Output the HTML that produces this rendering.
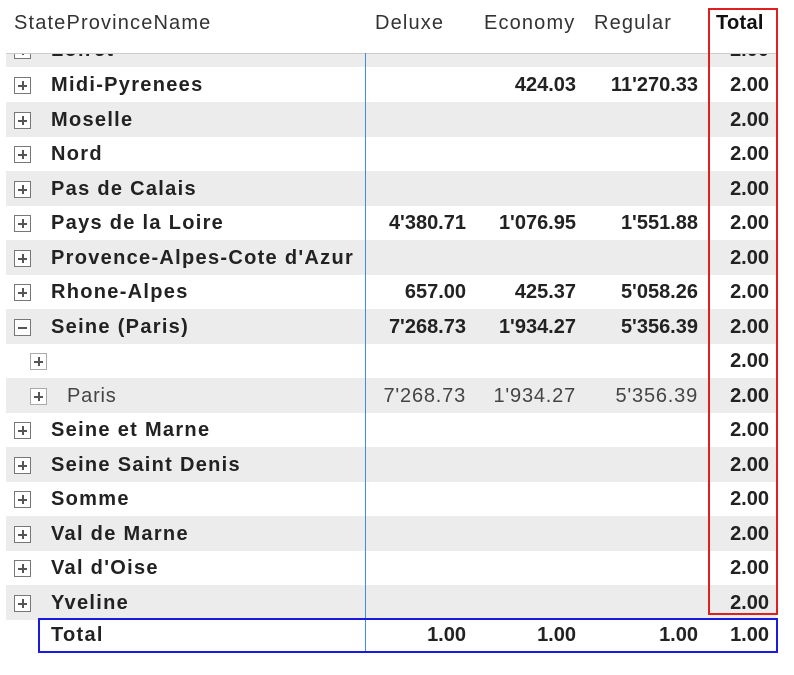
<!DOCTYPE html>
<html><head><style>
body{margin:0;width:794px;height:675px;background:#fff;font-family:"Liberation Sans",sans-serif;color:#222;position:relative;overflow:hidden}
.h{position:absolute;top:12px;font-size:20px;color:#333;letter-spacing:1.15px}
.r{position:absolute;left:6px;width:770px;height:35px;font-size:20px;font-weight:bold;line-height:37px}
.g{background:#ececec}
.r span{position:absolute}
.n{left:45px;letter-spacing:1.3px}
.c1{right:310px}.c2{right:200px}.c3{right:78px}.c4{right:7px}
.pl{position:absolute;left:8px;top:10px;width:15px;height:15px;border:1.5px solid #777;background:#fff}
.pl:before{content:"";position:absolute;left:3px;top:6.5px;width:9px;height:2px;background:#555}
.pl.p:after{content:"";position:absolute;left:6.5px;top:3px;width:2px;height:9px;background:#555}
.lt{font-weight:normal;color:#444;letter-spacing:0.8px}
</style></head><body>
<div class="h" style="left:14px">StateProvinceName</div>
<div class="h" style="left:375px">Deluxe</div>
<div class="h" style="left:484px">Economy</div>
<div class="h" style="left:594px">Regular</div>
<div class="h" style="left:716px;font-weight:bold;color:#111;letter-spacing:0.3px">Total</div>
<div style="position:absolute;left:6px;top:53px;width:770px;height:1px;background:#ccc"></div>
<div class="r g" style="top:32px;height:35px;clip-path:inset(22px 0 0 0)"><div class="pl p"></div><span class="n">Loiret</span><span class="c4">2.00</span></div>
<div class="r" style="top:67px"><div class="pl p"></div><span class="n">Midi-Pyrenees</span><span class="c2">424.03</span><span class="c3">11'270.33</span><span class="c4">2.00</span></div>
<div class="r g" style="top:102px"><div class="pl p"></div><span class="n">Moselle</span><span class="c4">2.00</span></div>
<div class="r" style="top:136px"><div class="pl p"></div><span class="n">Nord</span><span class="c4">2.00</span></div>
<div class="r g" style="top:171px"><div class="pl p"></div><span class="n">Pas de Calais</span><span class="c4">2.00</span></div>
<div class="r" style="top:205px"><div class="pl p"></div><span class="n">Pays de la Loire</span><span class="c1">4'380.71</span><span class="c2">1'076.95</span><span class="c3">1'551.88</span><span class="c4">2.00</span></div>
<div class="r g" style="top:240px"><div class="pl p"></div><span class="n">Provence-Alpes-Cote d'Azur</span><span class="c4">2.00</span></div>
<div class="r" style="top:274px"><div class="pl p"></div><span class="n">Rhone-Alpes</span><span class="c1">657.00</span><span class="c2">425.37</span><span class="c3">5'058.26</span><span class="c4">2.00</span></div>
<div class="r g" style="top:309px"><div class="pl"></div><span class="n">Seine (Paris)</span><span class="c1">7'268.73</span><span class="c2">1'934.27</span><span class="c3">5'356.39</span><span class="c4">2.00</span></div>
<div class="r" style="top:343px"><div class="pl p" style="left:24px;border-color:#aaa"></div><span class="c4">2.00</span></div>
<div class="r g" style="top:378px"><div class="pl p" style="left:24px;border-color:#aaa"></div><span class="n lt" style="left:61px">Paris</span><span class="c1 lt">7'268.73</span><span class="c2 lt">1'934.27</span><span class="c3 lt">5'356.39</span><span class="c4">2.00</span></div>
<div class="r" style="top:412px"><div class="pl p"></div><span class="n">Seine et Marne</span><span class="c4">2.00</span></div>
<div class="r g" style="top:447px"><div class="pl p"></div><span class="n">Seine Saint Denis</span><span class="c4">2.00</span></div>
<div class="r" style="top:481px"><div class="pl p"></div><span class="n">Somme</span><span class="c4">2.00</span></div>
<div class="r g" style="top:516px"><div class="pl p"></div><span class="n">Val de Marne</span><span class="c4">2.00</span></div>
<div class="r" style="top:550px"><div class="pl p"></div><span class="n">Val d'Oise</span><span class="c4">2.00</span></div>
<div class="r g" style="top:585px"><div class="pl p"></div><span class="n">Yveline</span><span class="c4">2.00</span></div>
<div class="r" style="top:618px;height:33px;line-height:35px"><span class="n">Total</span><span class="c1">1.00</span><span class="c2">1.00</span><span class="c3">1.00</span><span class="c4">1.00</span></div>
<div style="position:absolute;left:365px;top:53px;width:1px;height:598px;background:#3c8fe0"></div>
<div style="position:absolute;left:708px;top:8px;width:66px;height:603px;border:2px solid #e02020"></div>
<div style="position:absolute;left:38px;top:618px;width:736px;height:31px;border:2px solid #1a1ae0"></div>
</body></html>
